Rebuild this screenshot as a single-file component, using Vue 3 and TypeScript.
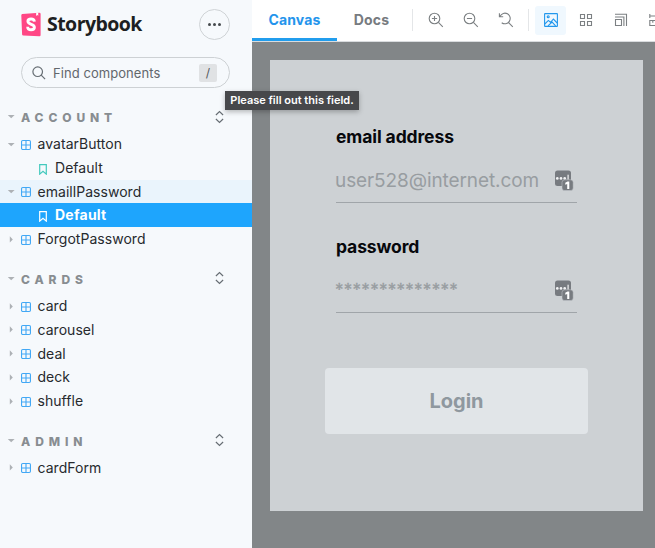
<script setup lang="ts">
interface Item {
  label: string
  kind: 'component' | 'story'
  open?: boolean
  state?: 'parent' | 'selected'
}
interface Section {
  title: string
  items: Item[]
}

const sections: Section[] = [
  {
    title: 'ACCOUNT',
    items: [
      { label: 'avatarButton', kind: 'component', open: true },
      { label: 'Default', kind: 'story' },
      { label: 'emaillPassword', kind: 'component', open: true, state: 'parent' },
      { label: 'Default', kind: 'story', state: 'selected' },
      { label: 'ForgotPassword', kind: 'component' },
    ],
  },
  {
    title: 'CARDS',
    items: ['card', 'carousel', 'deal', 'deck', 'shuffle'].map(
      (label): Item => ({ label, kind: 'component' }),
    ),
  },
  { title: 'ADMIN', items: [{ label: 'cardForm', kind: 'component' }] },
]

const fields = [
  { id: 'email', label: 'email address', placeholder: 'user528@internet.com' },
  { id: 'password', label: 'password', placeholder: '**************' },
]
</script>

<template>
  <div class="app">
    <aside class="sidebar">
      <header class="brand">
        <svg class="logo" viewBox="0 0 20 25" width="20" height="25">
          <path d="M1.2 1.9 18.4.8q1.2 0 1.2 1.2v21.1q0 1.3-1.3 1.2L2.3 23.6Q1.2 23.5 1.1 22.4L.3 3.2Q.3 2 1.2 1.9Z" fill="#ff4785" />
          <path d="m15.2.8 2-.1.1 3.1-1.1-.8-1.1.9Z" fill="#fff" />
          <path d="M13.4 9.6C13.2 7.7 12 7 10.1 7S6.9 7.8 6.9 9.3c0 3.7 6.5 2.5 6.5 5.9 0 1.7-1.3 2.6-3.3 2.6-2.2 0-3.5-.9-3.4-3" fill="none" stroke="#fff" stroke-width="2.9" />
        </svg>
        <span class="brand-name">Storybook</span>
        <button class="menu" aria-label="Menu"><i></i><i></i><i></i></button>
      </header>

      <div class="search">
        <svg width="14" height="14" viewBox="0 0 14 14" fill="none" stroke="#676e74" stroke-width="1.2">
          <circle cx="5.7" cy="5.7" r="4.8" /><path d="m9.2 9.2 3.9 3.9" />
        </svg>
        <span class="search-text">Find components</span>
        <kbd>/</kbd>
      </div>

      <nav>
        <section v-for="section in sections" :key="section.title">
          <div class="heading">
            <svg class="arrow" width="8" height="8" viewBox="0 0 8 8"><path d="M.8 2h6.8L4.2 5.3Z" /></svg>
            <span class="heading-text">{{ section.title }}</span>
            <svg class="sorter" width="10" height="14" viewBox="0 0 10 14" fill="none" stroke="#666d73" stroke-width="1.2">
              <path d="m1.9 5 3.6-3.4L9.1 5M1.9 9l3.6 3.4L9.1 9" />
            </svg>
          </div>
          <div v-for="(item, i) in section.items" :key="i" class="row" :class="[item.kind, item.state]">
            <svg v-if="item.kind === 'component'" class="arrow" width="8" height="8" viewBox="0 0 8 8">
              <path v-if="item.open" d="M.8 2.9h6.8L4.2 6.2Z" />
              <path v-else d="M2.8 1.2v6.4l3-3.2Z" />
            </svg>
            <svg v-if="item.kind === 'component'" class="kind-icon" width="10" height="10" viewBox="0 0 10 10" fill="none" stroke="#42a8f5" stroke-width="1.1">
              <rect x=".55" y=".55" width="8.9" height="8.9" rx="1.2" /><path d="M5 .5v9M.5 5h9" />
            </svg>
            <svg v-else class="kind-icon" width="8" height="11" viewBox="0 0 8 11" fill="none" stroke="currentColor" stroke-width="1.2">
              <path d="M.7.7h6.6v9.4L4 7.2.7 10.1Z" />
            </svg>
            <span class="label">{{ item.label }}</span>
          </div>
        </section>
      </nav>
    </aside>

    <main class="main">
      <div class="toolbar">
        <div class="tab active">Canvas</div>
        <div class="tab docs">Docs</div>
        <div class="tools zooms">
          <svg viewBox="0 0 16 16"><circle cx="6.5" cy="6.5" r="5.3" /><path d="m10.4 10.4 4.4 4.4M3.9 6.5h5.2M6.5 3.9v5.2" /></svg>
          <svg viewBox="0 0 16 16"><circle cx="6.5" cy="6.5" r="5.3" /><path d="m10.4 10.4 4.4 4.4M3.9 6.5h5.2" /></svg>
          <svg viewBox="0 0 16 16"><path d="M2.1 4.2a5.3 5.3 0 1 1 1.6 6.5M1.4 1.3v3.5h3.8M10.6 10.6l4.2 4.2" /></svg>
        </div>
        <div class="tools views">
          <span class="tool-active">
            <svg viewBox="0 0 16 16"><rect x="1.6" y="1.6" width="12.8" height="12.8" rx=".5" /><path d="m1.8 12 3.6-3.6 2.2 2 2.8-3.4 3.8 4M5 13.9l4.1-3.8 3.5 3.8" /><circle cx="5.2" cy="4.8" r="1" /></svg>
          </span>
          <svg class="grid-icon" viewBox="0 0 16 16"><path d="M2.5 2.5h4v4h-4ZM9.5 2.5h4v4h-4ZM2.5 9.5h4v4h-4ZM9.5 9.5h4v4h-4Z" /></svg>
          <svg class="grow-icon" viewBox="0 0 16 16"><path d="M2.5 7.5h6v6h-6ZM2 5h8.9v9M2 2.3h11.5V14" /></svg>
          <svg class="measure-icon" viewBox="0 0 16 16"><path d="M1.8 4h12.4M1.8 2v4M14.2 2v4M1.8 8.5h12.4v5H1.8ZM4.8 8.5v2.2M8 8.5v2.2" /></svg>
        </div>
      </div>

      <div class="canvas">
        <form class="card" @submit.prevent>
          <div v-for="field in fields" :key="field.id" class="field" :class="field.id">
            <label>{{ field.label }}</label>
            <div class="input">
              <span class="placeholder">{{ field.placeholder }}</span>
              <svg width="20" height="21" viewBox="0 0 20 21">
                <rect x="1" y=".5" width="16" height="15.5" rx="2.5" fill="#777b80" />
                <g fill="#f1f2f3"><circle cx="3.3" cy="8.4" r="1.35" /><circle cx="7" cy="8.4" r="1.35" /><circle cx="10.7" cy="8.4" r="1.35" /><rect x="13.5" y="4.7" width="1.2" height="5" /></g>
                <rect x="8" y="9.8" width="11.2" height="10.8" rx="2.7" fill="#777b80" stroke="#cbcfd2" stroke-width=".5" />
                <path d="m11.3 12.8 2.2-1.4h1.8v7.5h-2.1v-5l-1.9.8Z" fill="#fff" />
              </svg>
            </div>
          </div>
          <button class="login">Login</button>
        </form>
      </div>
    </main>
    <div class="tooltip" role="tooltip">Please fill out this field.</div>
  </div>
</template>

<style>
body { margin: 0; overflow: hidden; }
</style>

<style scoped>
* { box-sizing: border-box; }
.app { position: relative; display: flex; width: 655px; height: 548px; overflow: hidden; background: #f6f9fc; font-family: Inter, sans-serif; color: #272a2e; }
svg { display: block; flex: none; }
button { margin: 0; padding: 0; font-family: inherit; }
.sidebar { width: 252px; flex: none; }
.brand { display: flex; align-items: center; height: 49px; padding: 0 22px 0 21px; }
.logo { margin-top: -1px; }
.brand-name { margin: -2px 0 0 6px; font: 700 19.5px/28px "Open Sans", sans-serif; color: #1d1f22; letter-spacing: -.55px; }
.menu { display: flex; align-items: center; justify-content: center; gap: 1.5px; width: 31px; height: 31px; margin-left: auto; border: 1px solid #cfd3d6; border-radius: 50%; background: transparent; }
.menu i { width: 3.5px; height: 3.5px; border-radius: 50%; background: #45494d; }
.search { display: flex; align-items: center; width: 209px; height: 31px; margin: 8px 0 0 21px; padding: 0 12px 0 10px; border: 1px solid #cdd1d4; border-radius: 16px; }
.search-text { margin-left: 7px; font-size: 13px; color: #62676c; letter-spacing: .06px; }
kbd { width: 18px; height: 18px; margin-left: auto; border-radius: 2px; background: #e0e2e4; font: 12px/18px Inter, sans-serif; text-align: center; color: #53575b; }
nav { padding-top: 16px; }
section { padding-bottom: 15px; }
.heading { display: flex; align-items: center; height: 28px; padding: 0 28px 0 7px; }
.arrow { fill: #adb1b5; }
.heading .arrow { margin-top: -2px; }
.heading-text { margin: -1px 0 0 6px; font-size: 12px; font-weight: 800; letter-spacing: 4.9px; color: #888d91; }
.sorter { margin-left: auto; margin-top: -3px; }
.row { display: flex; align-items: center; height: 23.75px; padding-left: 7px; font-size: 14px; letter-spacing: .04px; }
.component .kind-icon { margin: 2px 0 0 6px; }
.component .label { margin-left: 6.5px; }
.story { padding-left: 39px; color: #43c9bd; }
.story .label { margin-left: 8px; color: #272a2e; }
.story .kind-icon { margin-top: 3px; }
.parent { background: #eaf4fc; }
.selected { background: #1ea5fd; font-weight: 700; letter-spacing: .25px; }
.selected, .selected .label { color: #fff; }
.selected .label { margin-top: -1px; }
.main { display: flex; flex-direction: column; flex: 1; min-width: 0; }
.toolbar { display: flex; align-items: stretch; height: 42px; background: #fff; overflow: hidden; border-bottom: 1px solid #d9dcdf; }
.tab { display: flex; align-items: center; justify-content: center; width: 85px; flex: none; padding-bottom: 2px; font-size: 14px; font-weight: 700; color: #777b80; }
.active { padding: 1px 0 0; border-bottom: 3px solid #219ded; color: #2494ec; letter-spacing: .15px; }
.docs { width: 69px; letter-spacing: .15px; }
.tools { display: flex; align-items: center; flex: none; height: 22px; margin-top: 9px; border-left: 1px solid #e4e6e8; }
.tools svg { width: 16px; height: 16px; fill: none; stroke: #7c8083; stroke-width: 1.1; }
.zooms { width: 113px; margin-left: 6px; padding-left: 15px; gap: 19px; }
.views { width: 150px; padding-left: 6px; margin-left: 3px; }
.tool-active { display: flex; align-items: center; justify-content: center; width: 31px; height: 29px; background: #f0f8fe; border-radius: 3px; }
.tools .tool-active svg { stroke: #2398ed; }
.grid-icon { margin-left: 11.5px; }
.grow-icon { margin-left: 19px; }
.measure-icon { margin-left: 19px; }
.canvas { flex: 1; padding: 18px 12px 37px 18px; background: #828688; }
.card { height: 451px; padding: 66px 55px 0; background: #cdd1d4; }
.field { height: 110px; padding: 0 11px; }
label { display: block; height: 23px; font-size: 17.5px; line-height: 21px; font-weight: 700; color: #07080c; letter-spacing: -.1px; }
.input { display: flex; align-items: center; justify-content: space-between; height: 54px; padding: 10px 3px 0 0; border-bottom: 1px solid #a0a5a9; }
.input svg { margin-top: -1px; }
.placeholder { margin-left: -1px; font-size: 19px; letter-spacing: -.1px; color: #989da1; }
.password .placeholder { margin-top: -1px; font-size: 17px; letter-spacing: .27px; -webkit-text-stroke: .3px #989da1; }
.login { display: block; width: 263px; height: 66px; margin-top: 22px; border: 0; border-radius: 4px; background: #e1e5e8; color: #8f989f; font-size: 20px; font-weight: 700; }
.tooltip { position: absolute; left: 225px; top: 91px; width: 134px; height: 19px; background: #47484b; color: #fff; font-size: 11px; font-weight: 600; line-height: 19px; text-align: center; white-space: nowrap; box-shadow: 0 2px 5px #0004; }
</style>
